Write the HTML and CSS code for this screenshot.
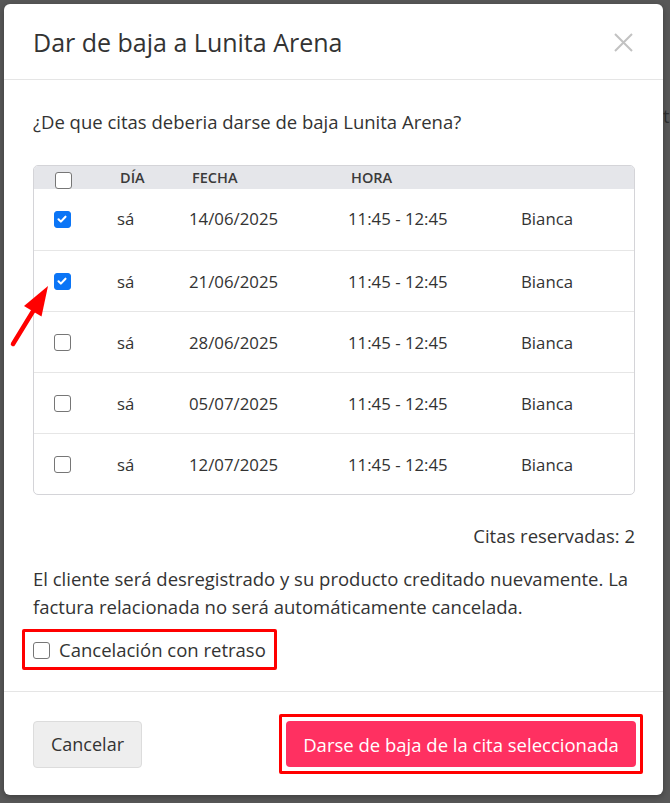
FILE: index.html
```html
<!DOCTYPE html>
<html lang="es">
<head>
    <meta charset="UTF-8">
    <meta name="viewport" content="width=device-width, initial-scale=1.0">
    <title>Dar de baja</title>
    <link rel="stylesheet" href="styles.css">
</head>
<body>
    <div class="backdrop-lines">
        <span class="ghost-t">t</span>
    </div>

    <div class="modal">
        <!-- Cabecera -->
        <div class="modal-header">
            <h2>Dar de baja a Lunita Arena</h2>
            <svg class="close" viewBox="0 0 19 19" width="19" height="19">
                <path d="M1 1L18 18M18 1L1 18" />
            </svg>
        </div>

        <!-- Cuerpo -->
        <div class="modal-body">
            <p class="question">¿De que citas deberia darse de baja Lunita Arena?</p>

            <div class="table-wrap">
                <table class="citas">
                    <colgroup>
                        <col class="c-check">
                        <col class="c-dia">
                        <col class="c-fecha">
                        <col class="c-hora">
                        <col>
                    </colgroup>
                    <thead>
                        <tr>
                            <th class="col-check"><span class="box"></span></th>
                            <th>DÍA</th>
                            <th>FECHA</th>
                            <th>HORA</th>
                            <th></th>
                        </tr>
                    </thead>
                    <tbody>
                        <tr>
                            <td class="col-check"><span class="box on"><svg viewBox="0 0 16 16"><path d="M4 8.3l2.7 2.7L12 5.4" /></svg></span></td>
                            <td>sá</td><td>14/06/2025</td><td>11:45 - 12:45</td><td>Bianca</td>
                        </tr>
                        <tr>
                            <td class="col-check"><span class="box on"><svg viewBox="0 0 16 16"><path d="M4 8.3l2.7 2.7L12 5.4" /></svg></span></td>
                            <td>sá</td><td>21/06/2025</td><td>11:45 - 12:45</td><td>Bianca</td>
                        </tr>
                        <tr>
                            <td class="col-check"><span class="box"></span></td>
                            <td>sá</td><td>28/06/2025</td><td>11:45 - 12:45</td><td>Bianca</td>
                        </tr>
                        <tr>
                            <td class="col-check"><span class="box"></span></td>
                            <td>sá</td><td>05/07/2025</td><td>11:45 - 12:45</td><td>Bianca</td>
                        </tr>
                        <tr>
                            <td class="col-check"><span class="box"></span></td>
                            <td>sá</td><td>12/07/2025</td><td>11:45 - 12:45</td><td>Bianca</td>
                        </tr>
                    </tbody>
                </table>
            </div>

            <p class="reservadas">Citas reservadas: 2</p>

            <p class="aviso">El cliente será desregistrado y su producto creditado nuevamente. La factura relacionada no será automáticamente cancelada.</p>

            <div class="retraso marked">
                <span class="box"></span>
                <span>Cancelación con retraso</span>
            </div>
        </div>

        <!-- Pie -->
        <div class="modal-footer">
            <button class="btn-cancel">Cancelar</button>
            <div class="marked marked-btn">
                <button class="btn-danger">Darse de baja de la cita seleccionada</button>
            </div>
        </div>

        <svg class="arrow" viewBox="0 0 50 70" width="50" height="70">
            <line x1="5" y1="64" x2="27" y2="28" />
            <polygon points="40,6 33.5,36.5 16,26" />
        </svg>
    </div>
</body>
</html>
```

FILE: styles.css
```css
body {
    margin: 0;
    height: 803px;
    background-color: #585858;
    font-family: "Open Sans", Arial, sans-serif;
    color: #333;
    overflow: hidden;
    position: relative;
}
.backdrop-lines {
    position: absolute;
    top: 0;
    right: 0;
    width: 7px;
    height: 803px;
}
.ghost-t {
    position: absolute;
    left: 0;
    top: 104px;
    font-size: 18px;
    color: #2e2e2e;
}
.modal {
    position: absolute;
    left: 4px;
    top: 4px;
    width: 659px;
    height: 791px;
    background: white;
    border-radius: 6px;
    box-shadow: 0 2px 6px rgba(0,0,0,0.3);
    display: flex;
    flex-direction: column;
}
.modal-header {
    height: 75px;
    border-bottom: 1px solid #e5e5e5;
    display: flex;
    align-items: center;
    justify-content: space-between;
    padding: 0 30px 0 29px;
}
.modal-header h2 {
    margin: 0;
    font-weight: 400;
    font-size: 25px;
    color: #333;
    padding-top: 1px;
}
.close {
    margin-top: 1px;
}
.close path {
    stroke: #c2c2c2;
    stroke-width: 2;
}
.modal-body {
    padding: 0 28px 0 29px;
}
.question {
    margin: 28px 0 29px;
    font-size: 18.5px;
    line-height: 28px;
}
.table-wrap {
    border: 1px solid #d4d4d8;
    border-radius: 5px;
    overflow: hidden;
}
.citas {
    width: 100%;
    table-layout: fixed;
    border-collapse: collapse;
    font-size: 16.8px;
}
.c-check { width: 83px; }
.c-dia { width: 72px; }
.c-fecha { width: 159px; }
.c-hora { width: 173px; }
.citas th {
    background-color: #e5e6ea;
    height: 23px;
    padding: 0 0 0 3px;
    text-align: left;
    font-size: 14.5px;
    font-weight: 600;
    color: #3a3a3a;
    line-height: 22px;
}
.citas td {
    height: 60px;
    padding: 0;
    border-top: 1px solid #e6e6e6;
}
.citas tbody tr:first-child td {
    border-top: none;
    height: 58px;
    padding-bottom: 3px;
}
.citas td.col-check {
    padding-left: 20px;
    line-height: 0;
}
.citas tbody tr:first-child td.col-check {
    height: 61px;
    padding-bottom: 0;
}
.citas th.col-check {
    padding: 0 0 0 21px;
    line-height: 0;
    vertical-align: bottom;
}
.box {
    display: inline-block;
    width: 17px;
    height: 17px;
    box-sizing: border-box;
    border: 1.5px solid #767676;
    border-radius: 3px;
    background: white;
    vertical-align: middle;
}
.box.on {
    background: #0b75f6;
    border-color: #0b75f6;
}
.box svg {
    display: block;
    width: 14px;
    height: 14px;
}
.box svg path {
    fill: none;
    stroke: white;
    stroke-width: 2.4;
    stroke-linecap: round;
    stroke-linejoin: round;
}
.reservadas {
    text-align: right;
    margin: 27px 0 0;
    font-size: 18.5px;
    line-height: 28px;
}
.aviso {
    margin: 15px 0 0;
    font-size: 18.5px;
    line-height: 28px;
}
.marked {
    border: 3px solid #ff0000;
    border-radius: 2px;
}
.retraso {
    display: inline-flex;
    align-items: center;
    gap: 9px;
    margin: 8px 0 0 -11px;
    padding: 0 8px 0 8px;
    height: 35px;
    font-size: 18.5px;
}
.retraso .box {
    margin-top: 1px;
}
.modal-footer {
    margin-top: auto;
    height: 103px;
    border-top: 1px solid #e5e5e5;
    display: flex;
    align-items: center;
    justify-content: space-between;
    padding: 0 20px 0 29px;
}
.btn-cancel {
    width: 109px;
    height: 47px;
    background-color: #eeeeee;
    border: 1px solid #dcdcdc;
    border-radius: 4px;
    font-family: inherit;
    font-size: 18px;
    color: #333;
    margin-top: 1px;
}
.marked-btn {
    padding: 4px;
    margin-top: 1px;
}
.btn-danger {
    display: block;
    width: 350px;
    height: 46px;
    background-color: #ff3061;
    border: none;
    border-radius: 4px;
    font-family: inherit;
    font-size: 18.5px;
    color: white;
}
.arrow {
    position: absolute;
    left: 4px;
    top: 276px;
}
.arrow line {
    stroke: #ff0000;
    stroke-width: 4.5;
    stroke-linecap: round;
}
.arrow polygon {
    fill: #ff0000;
}
```
